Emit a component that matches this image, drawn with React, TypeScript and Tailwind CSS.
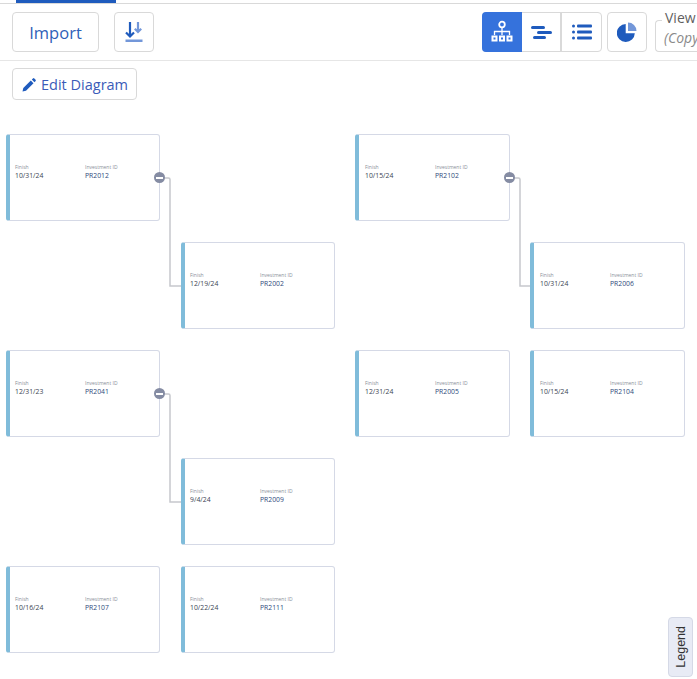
const nodes = [
  { pos: "left-[6px] top-[134px] w-[154px] pl-[5px]", finish: "10/31/24", id: "PR2012", collapse: true },
  { pos: "left-[181px] top-[242px] w-[154px] pl-[5px]", finish: "12/19/24", id: "PR2002" },
  { pos: "left-[355px] top-[134px] w-[155px] pl-[6px]", finish: "10/15/24", id: "PR2102", collapse: true },
  { pos: "left-[530px] top-[242px] w-[155px] pl-[6px]", finish: "10/31/24", id: "PR2006" },
  { pos: "left-[6px] top-[350px] w-[154px] pl-[5px]", finish: "12/31/23", id: "PR2041", collapse: true },
  { pos: "left-[181px] top-[458px] w-[154px] pl-[5px]", finish: "9/4/24", id: "PR2009" },
  { pos: "left-[355px] top-[350px] w-[155px] pl-[6px]", finish: "12/31/24", id: "PR2005" },
  { pos: "left-[530px] top-[350px] w-[155px] pl-[6px]", finish: "10/15/24", id: "PR2104" },
  { pos: "left-[6px] top-[566px] w-[154px] pl-[5px]", finish: "10/16/24", id: "PR2107" },
  { pos: "left-[181px] top-[566px] w-[154px] pl-[5px]", finish: "10/22/24", id: "PR2111" },
];

function Node({ pos, finish, id, collapse }: { pos: string; finish: string; id: string; collapse?: boolean }) {
  return (
    <div className={`absolute ${pos} flex h-[87px] items-start rounded-[3px] border border-[#d5d9e6] border-l-4 border-l-[#80bcda] bg-white pt-[29px]`}>
      <div className="w-[70px]">
        <div className="text-[5px] leading-[7px] text-[#8a8f99]">Finish</div>
        <div className="text-[6.8px] leading-[9px] text-[#3a4252]">{finish}</div>
      </div>
      <div>
        <div className="text-[5px] leading-[7px] text-[#8a8f99]">Investment ID</div>
        <div className="text-[6.8px] leading-[9px] text-[#2d4a7c]">{id}</div>
      </div>
      {collapse && (
        <div className="absolute right-[-6px] top-[37px] flex h-[11px] w-[11px] items-center justify-center rounded-full bg-[#858ca3]">
          <div className="h-[2px] w-[7px] bg-white" />
        </div>
      )}
    </div>
  );
}

function Link({ pos }: { pos: string }) {
  return (
    <svg className={`absolute ${pos}`} width="22" height="111" viewBox="0 0 22 111" fill="none">
      <path d="M0 1H9.5a1.5 1.5 0 0 1 1.5 1.5V109H22" stroke="#c6c8cd" strokeWidth="1.5" />
    </svg>
  );
}

function ImportIcon() {
  return (
    <svg width="20" height="22" viewBox="0 0 20 22" fill="none">
      <path d="M6 1V15.5M2 11.5 6 15.5l4-4" stroke="#1f5bbd" strokeWidth="2.2" />
      <path d="M14 1V11M10.8 7.8 14 11l3.2-3.2" stroke="#7397d9" strokeWidth="2.2" />
      <rect x="1.5" y="18.5" width="17" height="2.5" fill="#7397d9" />
    </svg>
  );
}

function TreeIcon() {
  return (
    <svg width="24" height="24" viewBox="0 0 24 24" fill="none" stroke="#fff">
      <circle cx="12" cy="4.5" r="2.8" strokeWidth="1.8" />
      <path d="M12 7.5V15M4.5 15v-3.5h15V15" strokeWidth="1.3" />
      <path d="M1.5 15.5h6v6h-6zM9 15.5h6v6H9zM16.5 15.5h6v6h-6z" fill="#fff" stroke="none" />
      <path d="M3.5 17.5h2v2h-2zM11 17.5h2v2h-2zM18.5 17.5h2v2h-2z" fill="#3572dc" stroke="none" />
    </svg>
  );
}

function GanttIcon() {
  return (
    <svg width="21" height="13" viewBox="0 0 21 13" fill="#1f5bbd">
      <rect x="0" y="0" width="14" height="3" rx="1.5" />
      <rect x="6" y="5" width="15" height="3" rx="1.5" />
      <rect x="2" y="10" width="13" height="3" rx="1.5" />
    </svg>
  );
}

function ListIcon() {
  return (
    <svg width="20" height="16" viewBox="0 0 20 16" fill="#1f5bbd">
      <circle cx="1.5" cy="2" r="1.5" />
      <circle cx="1.5" cy="8" r="1.5" />
      <circle cx="1.5" cy="14" r="1.5" />
      <rect x="5" y="0.5" width="15" height="3" rx="1" />
      <rect x="5" y="6.5" width="15" height="3" rx="1" />
      <rect x="5" y="12.5" width="15" height="3" rx="1" />
    </svg>
  );
}

function PieIcon() {
  return (
    <svg width="20" height="20" viewBox="0 0 20 20">
      <path d="M8.7 2v9.3h9.1A9 9 0 1 1 8.7 2Z" fill="#1f5bbd" />
      <path d="M11 0.5a8.5 8.5 0 0 1 8.5 8.5H11Z" fill="#7397d9" />
    </svg>
  );
}

function PencilIcon() {
  return (
    <svg width="14" height="14" viewBox="0 0 14 14" fill="#1f5bbd">
      <path d="M0.5 13.5 1.3 10 8.8 2.5l2.7 2.7L4 12.7Z" />
      <path d="M9.8 1.5 11 .4a1 1 0 0 1 1.3 0l1.3 1.3a1 1 0 0 1 0 1.3l-1.1 1.2Z" />
    </svg>
  );
}

export default function App() {
  return (
    <div className="relative h-[679px] w-[697px] overflow-hidden bg-white font-['Open_Sans',sans-serif]">
      <div className="h-[4px] border-b border-[#d9d9d9]">
        <div className="ml-[16px] h-[3px] w-[100px] bg-[#1f5bbd]" />
      </div>

      <div className="flex h-[57px] items-start border-b border-[#e6e6e6] pl-[12px] pt-[8px]">
        <button className="h-[40px] w-[87px] shrink-0 rounded-[4px] border border-[#d9d9d9] pt-[3px] text-[16.5px] font-medium text-[#2f5fb8]">Import</button>
        <button className="ml-[15px] flex h-[40px] w-[40px] shrink-0 items-center justify-center rounded-[4px] border border-[#d9d9d9]">
          <ImportIcon />
        </button>

        <div className="ml-[328px] flex h-[40px] w-[120px] shrink-0 rounded-[4px] border border-[#d9d9d9]">
          <div className="m-[-1px] mr-0 flex h-[40px] w-[40px] shrink-0 items-center justify-center rounded-l-[4px] bg-[#3572dc]">
            <TreeIcon />
          </div>
          <div className="flex w-[40px] items-center justify-center border-r-2 border-[#d9d9d9]">
            <GanttIcon />
          </div>
          <div className="flex flex-1 items-center justify-center">
            <ListIcon />
          </div>
        </div>
        <button className="ml-[5px] flex h-[40px] w-[40px] shrink-0 items-center justify-center rounded-[4px] border border-[#d9d9d9]">
          <PieIcon />
        </button>

        <div className="relative ml-[8px] mt-[8px] h-[32px] w-[60px] shrink-0 rounded-l-[4px] border border-r-0 border-[#d9d9d9] pl-[8px] pt-[4px]">
          <span className="absolute left-[6px] top-[-13px] bg-white px-[3px] text-[14px] leading-[20px] text-[#5f5f5f]">View</span>
          <span className="text-[14px] italic leading-[20px] text-[#8a8a8a]">(Copy</span>
        </div>
      </div>

      <div className="pl-[12px] pt-[7px]">
        <button className="flex h-[32px] w-[125px] items-center gap-[5px] rounded-[4px] border border-[#d9d9d9] pl-[9px] pt-[1px] text-[14.5px] font-medium text-[#3a5bb8]">
          <PencilIcon />
          Edit Diagram
        </button>
      </div>

      <Link pos="left-[159px] top-[176.5px]" />
      <Link pos="left-[509px] top-[176.5px]" />
      <Link pos="left-[159px] top-[392.5px]" />

      {nodes.map((n) => (
        <Node key={n.id} {...n} />
      ))}

      <div className="absolute left-[668px] top-[617px] flex h-[60px] w-[25px] items-center justify-center rounded-[4px] border border-[#d5d9e6] bg-[#e8ebf5] pl-[1px]">
        <span className="rotate-180 font-['Liberation_Sans',sans-serif] text-[12.5px] text-[#333] [writing-mode:vertical-rl]">Legend</span>
      </div>
    </div>
  );
}
